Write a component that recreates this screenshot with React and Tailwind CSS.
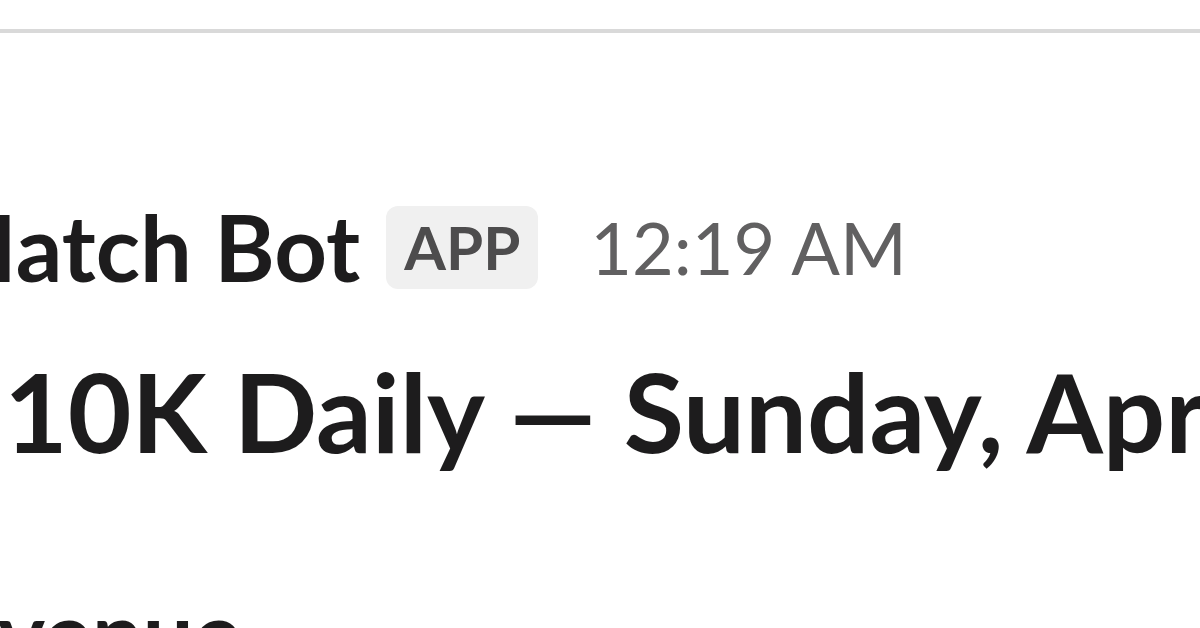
import React from "react";

const lato = { fontFamily: "Lato, 'Noto Sans', sans-serif" };

export default function App() {
  return (
    <div
      className="w-[1200px] h-[628px] overflow-hidden bg-white text-[#1d1c1d]"
      style={lato}
    >
      <div className="pt-[29px]">
        <div className="h-[4px] bg-[#d9d9d9]" />
      </div>

      {/* message header */}
      <div className="mt-[159px] ml-[-70px] flex items-center h-[110px] whitespace-nowrap">
        <span className="text-[92px] leading-[110px] font-bold">Match Bot</span>
        <span className="ml-[26px] h-[83px] px-[18px] rounded-[12px] bg-[#f0f0f0] text-[60px] leading-[83px] font-bold text-[#4d4c4d]">
          APP
        </span>
        <span className="ml-[52px] text-[72px] leading-[110px] text-[#616061]">12:19 AM</span>
      </div>

      {/* header block */}
      <div className="mt-[43px] ml-[4px] h-[130px] whitespace-nowrap">
        <span className="text-[110px] leading-[130px] font-bold">10K Daily — Sunday, April 14</span>
      </div>

      {/* section */}
      <div className="mt-[102px] ml-[-104px] h-[110px] whitespace-nowrap">
        <span className="text-[90px] leading-[110px] font-bold">Revenue</span>
      </div>
    </div>
  );
}
